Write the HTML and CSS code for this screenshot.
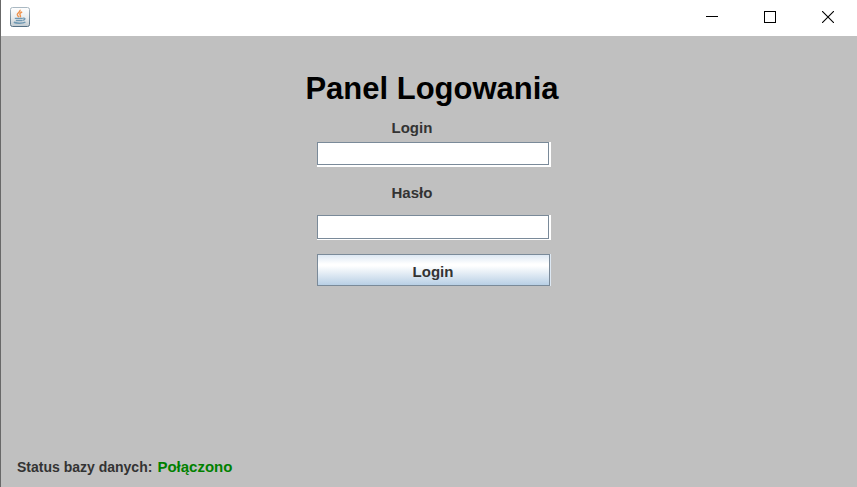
FILE: index.html
```html
<!DOCTYPE html>
<html lang="pl">
<head>
<meta charset="utf-8">
<title>Panel Logowania</title>
<link rel="stylesheet" href="styles.css">
</head>
<body>
<div class="window">
  <header class="titlebar">
    <svg class="app-icon" width="20" height="20" viewBox="0 0 20 20" aria-hidden="true">
      <defs>
        <linearGradient id="tile" x1="0" y1="0" x2="0" y2="1">
          <stop offset="0" stop-color="#ffffff"/>
          <stop offset=".55" stop-color="#e9eced"/>
          <stop offset="1" stop-color="#bfc9cf"/>
        </linearGradient>
        <linearGradient id="rim" x1="0" y1="0" x2="0" y2="1">
          <stop offset="0" stop-color="#a9b8c2"/>
          <stop offset="1" stop-color="#557084"/>
        </linearGradient>
      </defs>
      <rect x=".5" y=".5" width="19" height="19" rx="2" fill="url(#tile)" stroke="url(#rim)"/>
      <path d="M10 2.800c1 2-3 3-2.700 4.900.2 1 1 1.500 1.400 2.500M12.200 5c-2.200.8-2.900 1.900-2 3.100.6.8.4 1.400-.2 2.100" fill="none" stroke="#ef914a" stroke-width="1.400"/>
      <path d="M4.800 11.300h8M5.800 13.500h6.600M13 11.200c2.800-.5 2.500 1.700-.3 2.100" fill="none" stroke="#6f98b2" stroke-width="1.300"/>
      <path d="M3.800 15.300c2.500 1.200 8.800 1.200 11.600-.2" fill="none" stroke="#6f98b2" stroke-width="1.500"/>
    </svg>
    <div class="controls">
      <button type="button" class="control" aria-label="Minimalizuj">
        <svg width="12" height="12" viewBox="0 0 12 12" shape-rendering="crispEdges"><path d="M0 5.500h12" stroke="#000"/></svg>
      </button>
      <button type="button" class="control" aria-label="Maksymalizuj">
        <svg width="12" height="12" viewBox="0 0 12 12" shape-rendering="crispEdges"><rect x=".5" y=".5" width="11" height="11" fill="none" stroke="#000"/></svg>
      </button>
      <button type="button" class="control" aria-label="Zamknij">
        <svg width="12" height="12" viewBox="0 0 12 12"><path d="M0 0l12 12M12 0L0 12" stroke="#000" stroke-width="1.100"/></svg>
      </button>
    </div>
  </header>
  <main class="content">
    <h1 class="title">Panel Logowania</h1>
    <form class="form">
      <label class="label" for="login">Login</label>
      <input class="field" id="login" type="text" autocomplete="off">
      <label class="label label-password" for="password">Hasło</label>
      <input class="field" id="password" type="password" autocomplete="off">
      <button class="submit" type="button">Login</button>
    </form>
  </main>
  <footer class="status">
    <span class="status-label">Status bazy danych:</span>
    <span class="connected">Połączono</span>
  </footer>
</div>
</body>
</html>
```
FILE: styles.css
```css
* {
  box-sizing: border-box;
}

body {
  margin: 0;
  font: bold 15px/18px "Liberation Sans", Arial, sans-serif;
  color: #333;
}

.window {
  display: flex;
  flex-direction: column;
  min-height: 100vh;
  background: #c0c0c0;
  border-left: 1px solid #686868;
}

.titlebar {
  display: flex;
  justify-content: space-between;
  height: 36px;
  padding-left: 9px;
  background: #fff;
}

.app-icon {
  margin-top: 7px;
}

.controls {
  display: flex;
}

.control {
  display: flex;
  align-items: center;
  justify-content: center;
  width: 58px;
  height: 34px;
  padding: 0;
  border: 0;
  background: none;
}

.content {
  flex: 1;
  display: flex;
  flex-direction: column;
  align-items: center;
  padding: 35px 0 16px 8px;
}

.title {
  margin: 0;
  padding-right: 2px;
  font-size: 31px;
  line-height: 36px;
  color: #000;
}

.form {
  display: flex;
  flex-direction: column;
  width: 233px;
  margin-top: 12px;
}

.label {
  padding-left: 75px;
}

.label-password {
  margin: 19px 0 13px;
}

.field {
  width: 232px;
  height: 24px;
  padding: 0 4px;
  border: 1px solid #7a8a99;
  border-radius: 0;
  outline: 0;
  background: #fff;
  box-shadow: 1px 0 #fff, 2px 0 #fff, 0 1px #fff, 2px 1px #fff;
  font: inherit;
  color: inherit;
}

#login {
  height: 23px;
  margin-top: 5px;
  box-shadow: 1px 0 #fff, 2px 0 #fff, 0 2px #fff, 2px 2px #fff;
}

.submit {
  height: 32px;
  margin-top: 15px;
  padding: 4px 0 0;
  border: 1px solid #7a8a99;
  border-radius: 0;
  background: linear-gradient(#dde8f3, #fff 30%, #fff 36%, #b8cfe5);
  box-shadow: 1px 0 #dde8f3;
  font: inherit;
  color: inherit;
}

.status {
  display: flex;
  align-items: baseline;
  gap: 5px;
  padding: 0 16px 11px;
}

.status-label {
  font-size: 14px;
}

.connected {
  color: #008000;
}
```
